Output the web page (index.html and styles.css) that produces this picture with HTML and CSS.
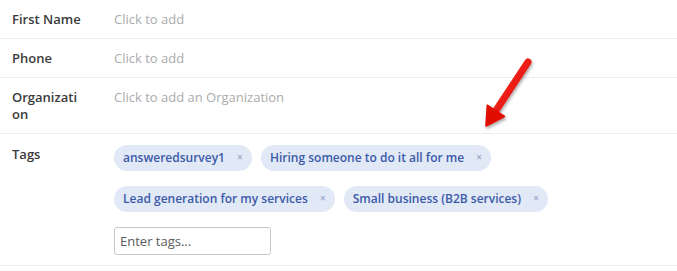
FILE: index.html
```html
<!DOCTYPE html>
<html>
<head>
<meta charset="utf-8">
<link rel="stylesheet" href="styles.css">
</head>
<body>
<div class="panel">
  <div class="row">
    <div class="label">First Name</div>
    <div class="value">Click to add</div>
  </div>
  <div class="row">
    <div class="label">Phone</div>
    <div class="value">Click to add</div>
  </div>
  <div class="row">
    <div class="label">Organizati<br>on</div>
    <div class="value">Click to add an Organization</div>
  </div>
  <div class="row row-tags">
    <div class="label label-tags">Tags</div>
    <div class="tag-field">
      <div class="tags">
        <span class="tag">answeredsurvey1<span class="x">×</span></span>
        <span class="tag">Hiring someone to do it all for me<span class="x">×</span></span>
        <span class="tag">Lead generation for my services<span class="x">×</span></span>
        <span class="tag">Small business (B2B services)<span class="x">×</span></span>
      </div>
      <input class="tag-input" type="text" placeholder="Enter tags...">
    </div>
  </div>
  <svg class="arrow" width="110" height="90" viewBox="0 0 110 90">
    <defs>
      <linearGradient id="g" x1="0" y1="0" x2="1" y2="1">
        <stop offset="0" stop-color="#ff3a2a"/>
        <stop offset="1" stop-color="#d90000"/>
      </linearGradient>
      <filter id="s" x="-30%" y="-30%" width="160%" height="160%">
        <feDropShadow dx="1" dy="2" stdDeviation="1.6" flood-color="#000" flood-opacity="0.35"/>
      </filter>
    </defs>
    <g filter="url(#s)">
      <line x1="88" y1="12" x2="55" y2="62" stroke="url(#g)" stroke-width="7" stroke-linecap="round"/>
      <polygon points="46,76 64.5,66.5 47.3,55.2" fill="#e00a00" stroke="#e00a00" stroke-width="1.5" stroke-linejoin="round"/>
    </g>
  </svg>
</div>
</body>
</html>
```
FILE: styles.css
```css
html, body {
  margin: 0;
  padding: 0;
  background: #fff;
}
body {
  font-family: "Open Sans", "Liberation Sans", sans-serif;
  font-size: 13px;
  line-height: 17px;
  color: #333;
}
.panel {
  position: relative;
  width: 677px;
}
.row {
  display: grid;
  grid-template-columns: 114px 1fr;
  padding: 10.5px 0;
  border-bottom: 1px solid #ececec;
}
.label {
  padding-left: 12px;
  font-weight: 600;
  color: #3a3a3a;
}
.value {
  color: #ababab;
}
.row-tags {
  padding: 10.5px 0 10px;
}
.label-tags {
  padding-top: 1px;
}
.tag-field {
  display: flex;
  flex-direction: column;
  align-items: flex-start;
  gap: 15px;
}
.tags {
  display: flex;
  flex-wrap: wrap;
  gap: 15px 9px;
  width: 440px;
}
.tag {
  display: inline-flex;
  align-items: center;
  height: 26px;
  padding: 0 9px;
  border-radius: 13px;
  background: #e1e8f6;
  color: #3b5ba8;
  font-size: 12px;
  font-weight: 600;
  white-space: nowrap;
  box-sizing: border-box;
}
.x {
  display: inline-block;
  width: 6px;
  margin-left: 12px;
  font-size: 10px;
  font-weight: 400;
  color: #8c9cc2;
  text-align: center;
}
.tag-input {
  width: 157px;
  height: 28px;
  box-sizing: border-box;
  border: 1px solid #c8c8c8;
  border-radius: 3px;
  padding: 0 5px;
  font-family: "Open Sans", "Liberation Sans", sans-serif;
  font-size: 13px;
  color: #555;
  outline: none;
}
.tag-input::placeholder {
  color: #5a5a5a;
}
.arrow {
  position: absolute;
  left: 440px;
  top: 50px;
}
```
